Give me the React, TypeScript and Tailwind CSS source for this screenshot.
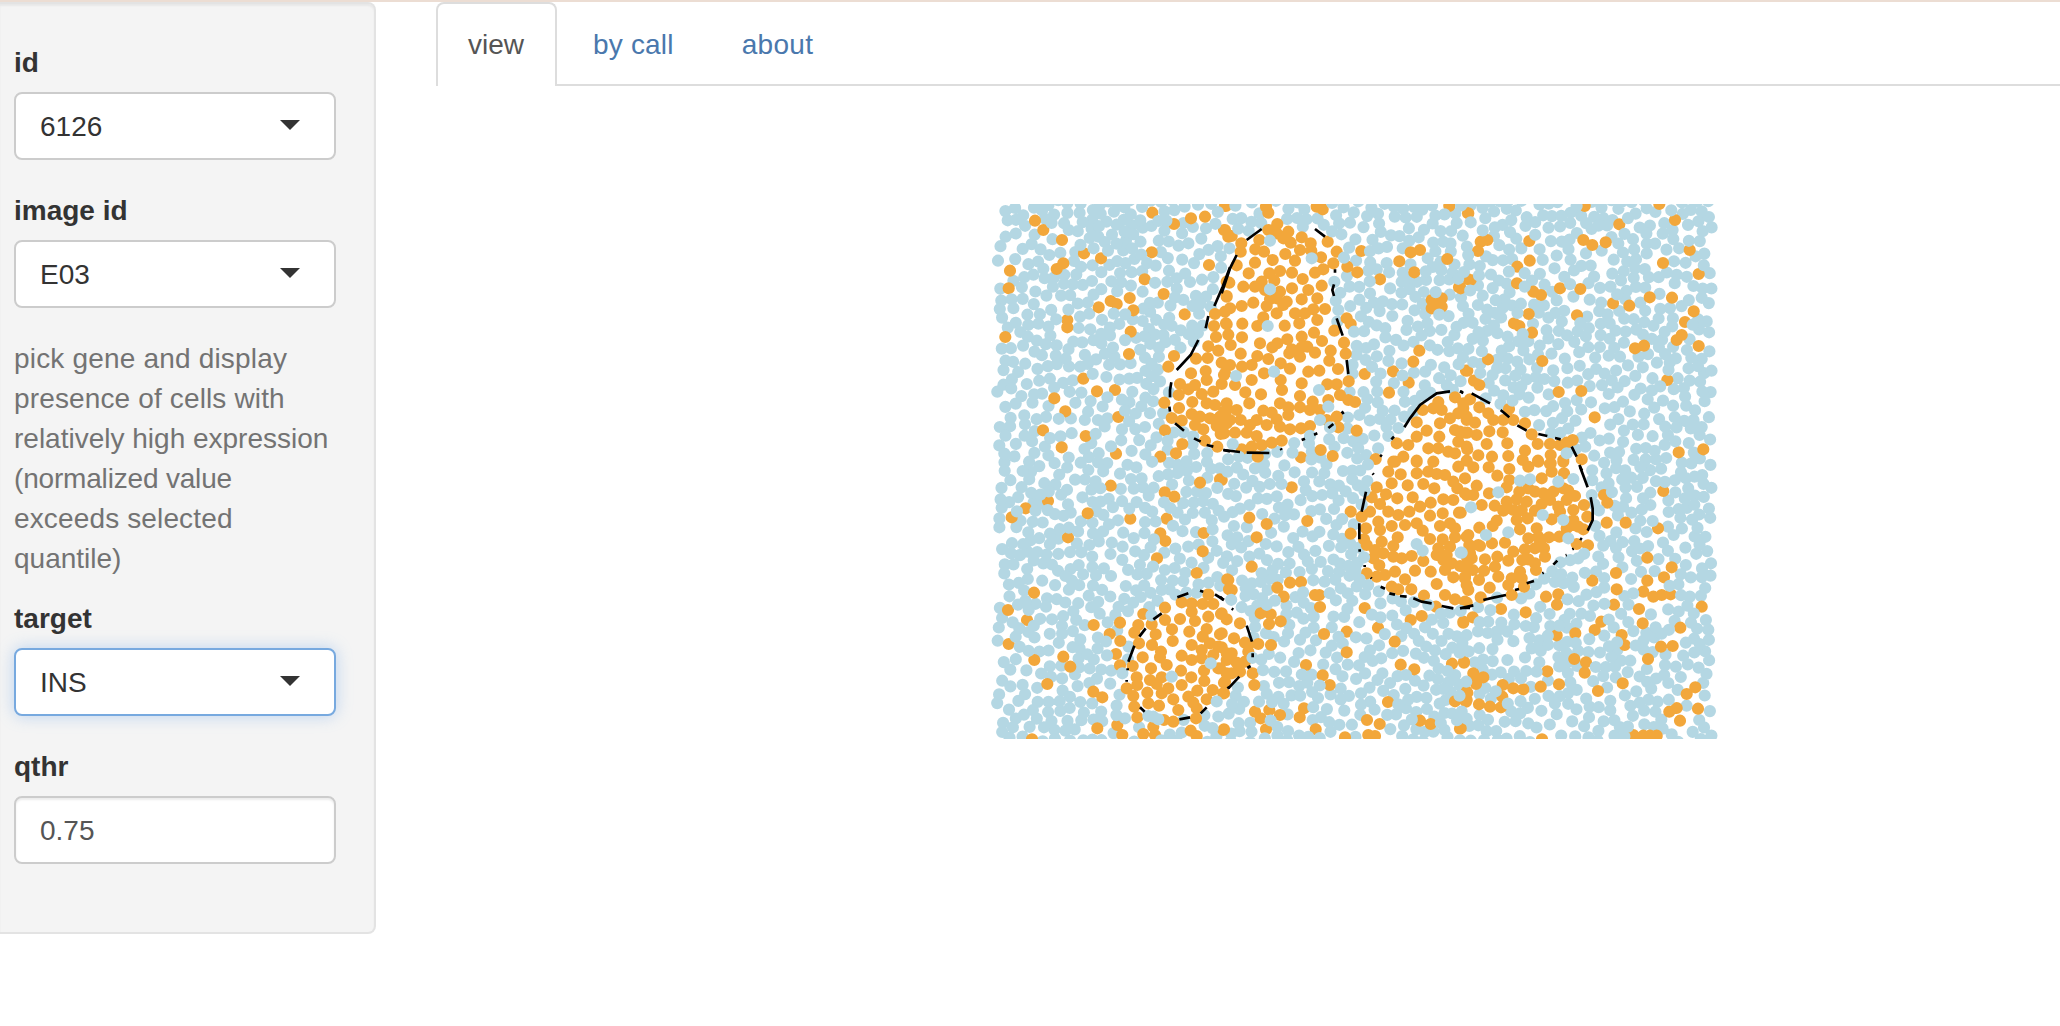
import React from "react";

type Point = { x: number; y: number };

type Tile = {
  x: number;
  y: number;
  high: string;
  low: string;
  outline: string;
};

// Each tile holds cell centres in thirds of a pixel, relative to its own corner.
const TILES: Tile[] = [
  {
    x: 980,
    y: 190,
    high: "517,68;633,85;675,80;582,102;735,48;732,120;745,140;165,92;190,120;246,150;312,190;363,205;250,220;230,237;90,242;86,295;515,187;687,225;494,268;551,312;449,324;392,333;410,342;356,352;460,361;614,373;262,412;262,390;452,425;76,441;447,492;582,498;565,530;310,566;351,604;405,600;223,625;256,664;415,681;189,721;317,738;245,772;408,791;553,638;555,721;607,762;588,790;541,800;740,275;705,372;735,365;702,408;740,320;708,441;738,400;685,469;715,482;683,504;648,506;725,518;633,550;677,543;680,570;600,582;625,598;645,585;596,615;665,612;700,605;725,582;735,550;637,636;597,654;575,684;680,640;705,645;635,672;660,680;690,685;720,680;605,692;645,705;670,718;710,708;675,752;712,770;722,732;740,700;740,660",
    low: "",
    outline:
      "M750,232L728,290L703,348M685,378L677,415M655,450L632,495L590,540M574,577L570,600V622M568,650L570,665M585,700L612,722M642,745L662,755M680,765L700,770M730,780L750,784",
  },
  {
    x: 1220,
    y: 190,
    high: "18,48;15,120;35,138;145,68;138,50;290,50;308,58;64,160;62,185;50,226;118,150;145,120;172,102;205,125;190,145;212,158;170,130;245,142;272,160;274,182;323,155;350,185;106,178;132,185;196,192;240,180;105,218;158,210;225,212;303,202;340,220;86,250;180,243;148,250;216,248;310,238;285,248;382,230;412,247;248,267;125,275;163,272;28,278;70,290;105,290;20,318;135,300;180,305;216,295;265,300;305,287;150,328;170,325;200,335;245,328;292,325;30,355;65,348;100,338;140,348;170,370;190,345;225,370;255,370;280,358;315,357;20,403;67,401;112,408;130,382;194,407;238,400;292,390;25,434;66,442;282,428;202,448;172,460;245,440;343,422;306,453;32,465;120,460;157,472;215,478;245,472;262,470;62,491;112,498;145,507;182,520;208,490;240,500;285,488;332,482;328,512;372,458;377,491;380,385;392,402;30,525;66,530;95,525;132,550;210,536;265,545;298,542;354,537;12,555;95,570;182,570;45,585;245,580;186,600;76,607;123,613;322,583;350,583;386,574;20,640;88,640;240,618;278,635;180,640;325,630;360,615;385,630;405,636;130,662;155,668;205,652;240,652;270,660;300,660;12,665;50,660;30,690;62,690;205,675;170,688;110,690;140,705;90,705;180,710;210,718;243,715;270,708;320,690;350,680;355,712;45,728;80,728;110,738;12,730;185,752;155,758;65,778;95,770;125,765;113,800;243,802;302,780;338,798;410,722;467,807;424,183;480,268;538,214;572,187;600,180;682,207;583,247;688,48;745,70;717,292;745,268;635,330;665,325;635,355;665,350;650,340;598,482;580,515;519,544;434,552;566,578;507,608;738,542;655,636;705,622;730,640;608,660;640,655;690,685;590,697;665,660;715,670;620,722;658,740;705,720;660,700;740,690;530,760;565,765;590,740;625,775;655,775;685,785;715,755;735,728;705,790;590,812;640,815;550,800;520,815;740,770;740,812",
    low: "150,152;275,205;150,298;143,408;162,545;48,558;297,600;325,650;300,690;38,762",
    outline:
      "M80,150L125,117M50,195L30,235L5,310M285,117L315,140M345,238v10M342,283L337,300L342,318M350,385L368,437M380,510L385,552M365,664l6,8M340,702L325,714M292,730l-10,4M255,746l-10,4M10,780L60,786M80,788L148,789M182,775l3,5M690,604L650,610L600,645L570,685L553,712M522,740l-8,8M480,795l6,4M720,604l10,5",
  },
  {
    x: 1460,
    y: 190,
    high: "24,70;374,48;598,42;478,103;645,90;82,150;62,155;54,183;208,153;370,150;397,165;437,157;209,212;172,230;689,180;609,219;716,252;32,270;171,280;2,295;300,295;361,297;220,305;243,315;569,322;636,323;459,340;508,347;701,364;206,372;351,376;675,396;162,400;178,408;216,428;665,435;650,450;525,475;552,467;716,468;84,508;247,513;22,542;42,572;58,585;622,570;296,606;364,603;404,682;147,657;656,787;730,778;30,628;58,652;10,655;85,670;20,680;45,698;100,690;130,690;160,690;195,700;88,724;128,727;22,728;50,735;215,733;0,725;80,762;22,778;142,760;233,762;270,762;300,765;320,758;338,750;55,796;96,800;195,782;145,798;234,812;272,795;310,810;365,808;188,810;272,820",
    low: "320,790",
    outline:
      "M0,604l8,3M35,610L90,640M122,660L148,682M172,706L200,722M235,732L262,738M285,744L302,748M335,770L350,800M358,825L366,842",
  },
  {
    x: 980,
    y: 460,
    high: "660,68;720,58;392,77;554,97;583,110;204,123;137,145;95,172;323,160;451,176;560,176;264,232;541,220;556,243;671,219;668,274;531,295;650,339;162,398;84,450;141,480;86,552;163,600;341,495;389,522;420,488;421,543;408,582;420,616;250,590;271,620;202,672;340,695;367,712;352,805;412,795;427,825;156,838;730,810;745,360;747,388;685,403;605,427;555,443;635,430;668,432;700,432;490,462;555,480;600,477;645,483;685,470;723,462;635,455;475,495;515,493;463,518;527,523;576,508;628,515;680,507;720,523;668,530;477,550;516,555;543,575;578,543;635,555;690,550;715,560;488,592;540,592;605,587;560,615;458,618;513,625;635,600;665,595;700,585;665,570;603,632;715,625;672,632;470,652;545,652;510,660;634,652;673,663;472,675;440,685;502,698;530,672;565,685;605,675;652,692;698,690;732,668;545,700;580,718;625,710;460,708;463,740;505,730;537,737;680,718;640,728;595,750;650,745;472,772;648,775;552,780;580,785;730,700;520,800;490,822;525,825;632,812;650,828;740,600;740,580;740,640",
    low: "575,650;692,610;520,770;505,768;535,778",
    outline:
      "M592,412L625,400M660,392l10,3M705,403L732,420M545,460L520,478M497,505L478,530M463,557L445,605M443,625v6M440,660v5M480,742L494,755M598,778L630,772M662,760L680,742M742,685l6,-4",
  },
  {
    x: 1220,
    y: 460,
    high: "5,60;215,82;88,173;140,192;262,183;110,232;95,320;22,358;35,390;210,368;243,366;172,383;191,410;285,405;298,405;300,441;434,444;474,503;605,468;572,480;730,485;122,460;152,463;147,492;182,484;312,522;380,515;380,577;115,552;153,555;98,640;103,675;524,545;542,614;583,628;258,615;308,646;329,675;696,611;732,608;504,726;705,724;740,720;740,695;105,755;122,775;148,750;180,765;138,808;252,745;239,772;287,808;12,808;375,832;441,780;479,792;445,825;465,828;600,782;632,792;720,806;12,700;5,460;20,478;5,520;60,490;42,535;75,548;5,562;35,580;50,608;75,605;0,625;85,575;35,640;60,635;15,665;85,555;525,5;505,35;542,43;590,5;640,5;715,20;590,40;625,35;650,42;675,45;735,55;470,82;515,70;563,76;610,72;643,85;700,65;712,85;498,103;532,115;578,112;455,112;480,132;632,128;670,118;700,120;735,100;600,140;392,155;425,170;450,155;505,155;535,165;568,155;630,167;668,160;717,158;475,185;438,205;515,198;555,195;590,190;480,210;608,212;660,198;690,190;705,205;392,221;630,237;668,238;705,232;533,232;485,245;432,238;440,255;520,258;465,270;690,260;655,265;490,280;520,290;545,295;575,288;610,303;650,285;680,285;460,295;670,300;695,310;720,318;738,318;478,316;585,332;632,335;675,330;525,335;555,358;440,340;470,350;495,345;700,352;650,372;735,350;740,375;515,380;535,388;574,388;612,407;675,405;705,418;648,440;735,425;740,230;740,290",
    low: "590,252;608,272;722,278;432,292",
    outline:
      "M0,410L10,420M35,446l5,3M80,497L96,545M98,580v12M82,624l10,-6M58,650L25,685M458,40l3,4M438,95L425,155M418,190V238M419,268v7M434,315v6M452,353l3,3M482,380L495,386M508,400L525,404M540,408L560,410M580,415L605,425L635,430M665,438L700,445M728,444L750,444",
  },
  {
    x: 1460,
    y: 460,
    high: "610,93;442,128;432,105;440,188;497,188;594,205;562,293;635,322;468,339;612,352;397,362;562,362;550,395;470,388;580,410;605,405;632,403;350,252;384,256;462,434;537,447;725,440;548,490;661,503;258,410;295,403;291,434;123,447;197,457;424,485;404,510;290,526;346,520;485,525;494,555;603,560;638,558;564,597;343,597;378,607;374,638;12,605;262,634;38,472;10,488;297,673;242,680;488,670;414,693;706,682;680,702;714,746;650,744;628,755;660,782;40,640;70,652;48,672;50,655;22,698;18,725;128,675;160,685;190,688;127,710;57,733;90,740;123,742;2,805;246,838;520,825;550,827;590,827;570,827;40,22;86,22;15,55;50,77;20,105;40,105;87,100;148,27;112,47;148,60;140,82;205,20;235,5;270,12;310,5;275,35;312,40;245,55;65,135;104,137;178,95;205,85;225,95;140,125;170,118;200,125;250,100;280,95;310,85;325,92;345,108;245,132;270,120;295,140;320,120;372,135;130,152;160,150;185,150;225,152;340,150;300,155;2,158;110,182;58,203;98,198;170,180;203,175;275,178;340,180;382,170;180,208;230,205;320,205;355,200;370,208;340,195;25,225;135,248;96,250;55,255;205,235;235,230;267,232;298,230;240,245;28,255;60,258;30,280;160,275;195,268;225,265;252,265;255,290;75,298;35,295;112,290;145,302;105,320;205,298;225,310;187,300;12,320;38,330;72,332;180,335;228,330;15,355;57,360;115,350;155,355;185,355;25,390;89,383;145,375;192,380;62,412;155,405;20,428",
    low: "180,62;210,58;295,65;340,57;115,97;33,142;78,225;145,217;248,165;310,180;325,235;5,278",
    outline:
      "M0,445L40,436M70,420L100,413L138,405M165,390l12,-3M200,370L222,363M280,314L292,302M360,20L383,82M392,112L398,145V180L383,212M360,235l6,4M337,268l4,-2M317,286l3,-1M247,340l4,-2",
  },
];

const ISLETS: number[][][] = [
  [[1248, 240], [1230, 257], [1215, 300], [1203, 335], [1171, 370], [1170, 410], [1178, 425], [1205, 442], [1230, 449], [1270, 453], [1300, 440], [1328, 428], [1345, 410], [1348, 372], [1345, 345], [1336, 318], [1333, 290], [1335, 265], [1328, 240], [1315, 229], [1290, 226], [1262, 228]],
  [[1449, 391], [1430, 398], [1407, 422], [1392, 440], [1374, 470], [1366, 492], [1359, 530], [1360, 555], [1370, 578], [1395, 594], [1430, 603], [1460, 608], [1485, 602], [1520, 588], [1545, 572], [1575, 545], [1594, 520], [1592, 500], [1585, 470], [1573, 446], [1560, 438], [1530, 430], [1505, 415], [1485, 398], [1465, 393]],
  [[1200, 592], [1180, 597], [1160, 612], [1140, 632], [1130, 655], [1127, 680], [1133, 700], [1143, 712], [1160, 718], [1185, 719], [1205, 708], [1228, 688], [1245, 673], [1253, 655], [1252, 640], [1243, 615], [1225, 598]],
];

const LEFT = 990;
const TOP = 204;
const WIDTH = 730;
const HEIGHT = 535;

function parse(tile: Tile, list: string): Point[] {
  if (!list) return [];
  return list.split(";").map((pair) => {
    const [x, y] = pair.split(",").map(Number);
    return { x: tile.x + x / 3, y: tile.y + y / 3 };
  });
}

function inside(poly: number[][], x: number, y: number) {
  let hit = false;
  for (let i = 0, j = poly.length - 1; i < poly.length; j = i++) {
    const [xi, yi] = poly[i];
    const [xj, yj] = poly[j];
    if (yi > y !== yj > y && x < ((xj - xi) * (y - yi)) / (yj - yi) + xi) hit = !hit;
  }
  return hit;
}

function randomSource(seed: number) {
  let s = seed;
  return () => {
    s = (s + 0x6d2b79f5) | 0;
    let t = Math.imul(s ^ (s >>> 15), 1 | s);
    t = (t + Math.imul(t ^ (t >>> 7), 61 | t)) ^ t;
    return ((t ^ (t >>> 14)) >>> 0) / 4294967296;
  };
}

const high = TILES.flatMap((t) => parse(t, t.high));
const fixedLow = TILES.flatMap((t) => parse(t, t.low));

// Background tissue: random cells kept a varying minimum distance apart.
function scatter(): Point[] {
  const rand = randomSource(6126);
  const cell = 16;
  const grid = new Map<string, Point[]>();
  const put = (p: Point) => {
    const key = `${Math.floor(p.x / cell)},${Math.floor(p.y / cell)}`;
    const bucket = grid.get(key);
    if (bucket) bucket.push(p);
    else grid.set(key, [p]);
  };
  high.forEach(put);
  fixedLow.forEach(put);
  const out: Point[] = [];
  for (let i = 0; i < 26000; i++) {
    const x = 996 + rand() * 716;
    const y = 200 + rand() * 542;
    const wave = Math.sin(x / 41 + y / 67) * Math.sin(y / 37 - x / 83);
    const gap = 7.5 + 2.8 * rand() - 0.6 * wave;
    const edge = 7 * rand();
    if (x < 996 + edge || x > 1714 - edge) continue;
    if (ISLETS.some((poly) => inside(poly, x, y))) continue;
    const cx = Math.floor(x / cell);
    const cy = Math.floor(y / cell);
    let free = true;
    for (let a = cx - 1; a <= cx + 1 && free; a++) {
      for (let b = cy - 1; b <= cy + 1 && free; b++) {
        free = !(grid.get(`${a},${b}`) || []).some((p) => Math.hypot(p.x - x, p.y - y) < gap);
      }
    }
    if (free) {
      const p = { x, y };
      put(p);
      out.push(p);
    }
  }
  return out;
}

const low = scatter();

function dots(points: Point[]) {
  return points
    .map((p) => `M${(p.x - LEFT - 6.1).toFixed(1)},${(p.y - TOP).toFixed(1)}a6.1,6.1 0 1,0 12.2,0a6.1,6.1 0 1,0 -12.2,0`)
    .join("");
}

function CellMap() {
  return (
    <svg className="block h-[535px] w-[730px]" viewBox={`0 0 ${WIDTH} ${HEIGHT}`}>
      <path d={dots(low.filter((_, i) => i % 3 !== 0))} fill="#b4d7e3" />
      <path d={dots(high)} fill="#f2a73b" />
      <path d={dots(low.filter((_, i) => i % 3 === 0))} fill="#b4d7e3" />
      <path d={dots(fixedLow)} fill="#b4d7e3" />
      {TILES.map((t) => (
        <path
          key={`${t.x}-${t.y}`}
          d={t.outline}
          transform={`translate(${t.x - LEFT} ${t.y - TOP}) scale(${1 / 3})`}
          fill="none"
          stroke="#000"
          strokeWidth={8}
        />
      ))}
    </svg>
  );
}

function Select({ label, value, focused }: { label: string; value: string; focused?: boolean }) {
  return (
    <div className="mb-[30px]">
      <div className="mb-[9px] pt-px font-bold">{label}</div>
      <div
        className={
          "flex h-[68px] items-center justify-between rounded-lg border-2 bg-white pt-px pr-[34px] pl-6 " +
          (focused
            ? "border-[#77a9df] shadow-[0_0_16px_rgba(102,160,233,0.4)]"
            : "border-[#cccccc]")
        }
      >
        <span>{value}</span>
        <span className="mb-[4px] h-0 w-0 border-x-[10px] border-t-[10px] border-x-transparent border-t-[#333333]" />
      </div>
    </div>
  );
}

export default function App() {
  return (
    <div className="h-[1026px] w-[2060px] overflow-hidden border-t-2 border-[#ecddd3] bg-white font-['Liberation_Sans',Arial,sans-serif] text-[28px] leading-[40px] text-[#333333]">
      <div className="flex items-start">
        <aside className="h-[932px] w-[376px] shrink-0 rounded-r-lg border-2 border-l-0 border-[#e3e3e3] bg-[#f4f4f4] pt-[38px] pr-[38px] pl-[14px] shadow-[inset_0_2px_2px_rgba(0,0,0,0.05)]">
          <Select label="id" value="6126" />
          <Select label="image id" value="E03" />
          <p className="mb-[19px] pt-px whitespace-nowrap text-[#737373]">
            <span className="block tracking-[0.18px]">pick gene and display</span>
            <span className="block tracking-[0.14px]">presence of cells with</span>
            <span className="block">relatively high expression</span>
            <span className="block tracking-[-0.18px]">(normalized value</span>
            <span className="block tracking-[0.14px]">exceeds selected</span>
            <span className="block">quantile)</span>
          </p>
          <Select label="target" value="INS" focused />
          <div className="mb-[9px] pt-px font-bold">qthr</div>
          <div className="flex h-[68px] items-center rounded-lg border-2 border-[#cccccc] bg-white pt-px pl-6 text-[#555555] shadow-[inset_0_2px_2px_rgba(0,0,0,0.075)]">
            0.75
          </div>
        </aside>
        <main className="ml-[60px] min-w-0 grow">
          <nav className="flex h-[84px] gap-1 border-b-2 border-[#dddddd]">
            <span className="h-[84px] w-[121px] rounded-t-lg border-2 border-b-0 border-[#dddddd] bg-white px-[30px] pt-[21px] text-[#555555]">
              view
            </span>
            <span className="px-8 pt-[23px] tracking-[0.18px] whitespace-nowrap text-[#4a78ad]">by call</span>
            <span className="px-8 pt-[23px] tracking-[0.3px] whitespace-nowrap text-[#4a78ad]">about</span>
          </nav>
          <section className="pt-[118px] pl-[554px]">
            <CellMap />
          </section>
        </main>
      </div>
    </div>
  );
}
